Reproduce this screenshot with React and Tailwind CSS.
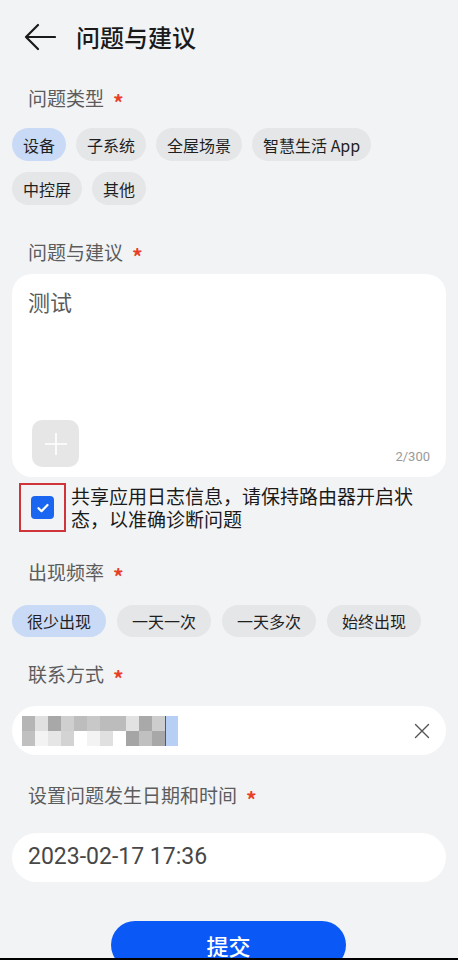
import { useState } from "react";

const types = ["设备", "子系统", "全屋场景", "智慧生活 App", "中控屏", "其他"];
const freqs = ["很少出现", "一天一次", "一天多次", "始终出现"];

// mosaic blocks covering the contact number
const mosaic = [
  ["#b5b5b5", "#e0e0e0", "#a8a8a8", "#cfcfcf", "#bdbdbd", "#c8c8c8", "#bcbcbc", "#bcbcbc", "#e2e2e2", "#a9a9a9", "#cdcdcd"],
  ["#c0c0c0", "#f3f3f3", "#e6e6e6", "#d3d3d3", "#ffffff", "#f3f3f3", "#e0e0e0", "#ffffff", "#a5a5a5", "#c0c0c0", "#a8a8a8"],
];

const Label = ({ text, className = "" }) => (
  <div className={`flex items-center pl-4 text-[19px] text-[#5c5c5c] ${className}`}>
    <span>{text}</span>
    <span className="ml-[9px] text-[21px] font-bold text-[#e84026] leading-none translate-y-[4px]">*</span>
  </div>
);

const Chip = ({ text, active, wide, onClick }) => (
  <button
    onClick={onClick}
    className={`rounded-full text-[16px] text-[#1f1f1f] leading-none ${
      wide ? "h-[32px] px-[15px]" : "h-[33px] px-[11px]"
    } ${active ? "bg-[#c9daf6]" : "bg-[#e5e6e8]"}`}
  >
    {text}
  </button>
);

const App = () => {
  const [type, setType] = useState(0);
  const [freq, setFreq] = useState(0);
  const [checked, setChecked] = useState(true);

  return (
    <div
      className="w-[458px] h-[960px] overflow-hidden bg-[#f1f3f5] flex flex-col"
      style={{ fontFamily: '"Noto Sans CJK SC", "Noto Sans", Roboto, sans-serif' }}
    >
      <div className="flex-1 overflow-hidden px-3">
        {/* Header */}
        <div className="h-[74px] flex items-center">
          <svg width="32" height="28" viewBox="0 0 32 28" className="ml-[12px]" fill="none" stroke="#1a1a1a" strokeWidth="2.2" strokeLinecap="round" strokeLinejoin="round">
            <path d="M2 14h29M14 2L2 14l12 12" />
          </svg>
          <h1 className="ml-[20px] text-[24px] font-medium text-[#1a1a1a]">问题与建议</h1>
        </div>

        {/* 问题类型 */}
        <Label text="问题类型" className="h-[48px]" />
        <div className="mt-[6px] flex flex-wrap gap-x-[10px] gap-y-[11px]">
          {types.map((t, i) => (
            <Chip key={t} text={t} active={type === i} onClick={() => setType(i)} />
          ))}
        </div>

        {/* 问题与建议 */}
        <Label text="问题与建议" className="mt-[25px] h-[44px]" />
        <div className="h-[203px] rounded-[20px] bg-white flex flex-col px-4 pt-[12px] pb-[10px]">
          <div className="text-[22px] text-[#5a5a5a] leading-[30px]">测试</div>
          <div className="flex-1" />
          <div className="flex items-end justify-between">
            <div className="ml-[4px] w-[47px] h-[47px] rounded-[10px] bg-[#e6e6e6] flex items-center justify-center">
              <svg width="24" height="24" viewBox="0 0 24 24" stroke="#ffffff" strokeWidth="1.6">
                <path d="M12 1v22M1 12h22" />
              </svg>
            </div>
            <span className="text-[13px] text-[#9a9a9a] mb-[1px]" style={{ fontFamily: "Roboto, sans-serif" }}>
              2/300
            </span>
          </div>
        </div>

        {/* checkbox */}
        <div className="mt-[6px] flex items-start">
          <div className="ml-[7px] w-[47px] h-[49px] border-2 border-[#d0343b] flex items-center justify-center">
            <button
              onClick={() => setChecked(!checked)}
              className={`w-[23px] h-[23px] rounded-[4px] flex items-center justify-center ${
                checked ? "bg-[#1a66f0]" : "bg-white border border-gray-400"
              }`}
            >
              {checked && (
                <svg width="14" height="14" viewBox="0 0 14 14" fill="none" stroke="#fff" strokeWidth="2.2" strokeLinecap="round" strokeLinejoin="round">
                  <path d="M2.5 7.2l3 3 6-6.2" />
                </svg>
              )}
            </button>
          </div>
          <p className="ml-[5px] mt-[1px] w-[358px] text-[19px] leading-[23px] text-[#1a1a1a]">
            共享应用日志信息，请保持路由器开启状态，以准确诊断问题
          </p>
        </div>

        {/* 出现频率 */}
        <Label text="出现频率" className="mt-[16px] h-[48px]" />
        <div className="mt-[9px] flex gap-[11px]">
          {freqs.map((f, i) => (
            <Chip key={f} text={f} wide active={freq === i} onClick={() => setFreq(i)} />
          ))}
        </div>

        {/* 联系方式 */}
        <Label text="联系方式" className="mt-[13px] h-[48px]" />
        <div className="mt-[8px] h-[49px] rounded-full bg-white flex items-center pl-[10px] pr-[16px]">
          <div className="flex items-center">
            <div className="flex flex-col">
              {mosaic.map((row, r) => (
                <div key={r} className="flex">
                  {row.map((c, k) => (
                    <div key={k} className="w-[13px] h-[15px]" style={{ backgroundColor: c }} />
                  ))}
                </div>
              ))}
            </div>
            <div className="w-[13px] h-[30px] bg-[#b8cff5] border-l border-[#3a5a9a]" />
          </div>
          <div className="flex-1" />
          <svg width="16" height="16" viewBox="0 0 16 16" stroke="#555" strokeWidth="1.4" strokeLinecap="round">
            <path d="M1.5 1.5l13 13M14.5 1.5l-13 13" />
          </svg>
        </div>

        {/* 日期时间 */}
        <Label text="设置问题发生日期和时间" className="mt-[16px] h-[48px]" />
        <div className="mt-[14px] h-[49px] rounded-full bg-white flex items-center px-4">
          <span className="text-[23px] text-[#474747]" style={{ fontFamily: "Roboto, sans-serif" }}>
            2023-02-17 17:36
          </span>
        </div>

        {/* 提交 */}
        <div className="mt-[39px] flex justify-center">
          <button className="ml-[-1px] w-[235px] h-[48px] rounded-full bg-[#0a59f7] text-white text-[22px] font-medium">
            提交
          </button>
        </div>
      </div>
      <div className="h-[2px] bg-black" />
    </div>
  );
};

export default App;
